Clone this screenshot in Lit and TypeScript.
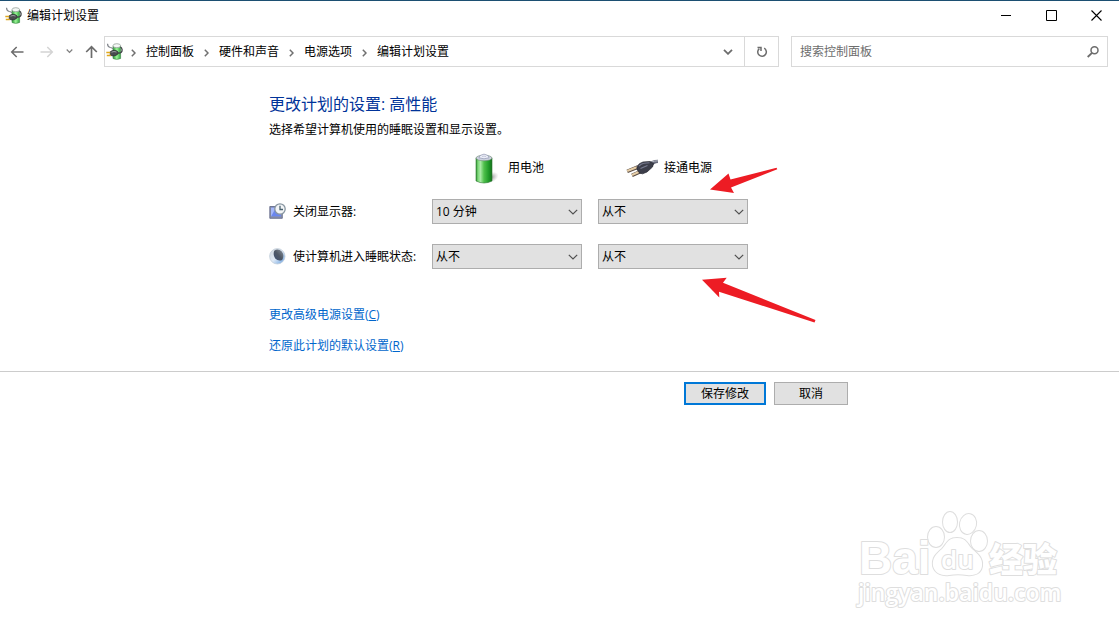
import { LitElement, html, css, svg } from "lit";
import { customElement, property } from "lit/decorators.js";

const powerIcon = html`<svg class="power" viewBox="0 0 17 17" width="17" height="17" aria-hidden="true">
  <defs>
    <linearGradient id="pg" x1="0" x2="1"><stop offset="0" stop-color="#2c9c38" /><stop offset=".5" stop-color="#9df598" /><stop offset="1" stop-color="#2fa53c" /></linearGradient>
  </defs>
  <path d="M7 3v12.500q3.800 1.800 7.600 0V3z" fill="url(#pg)" stroke="#3c8546" stroke-width=".6" />
  <ellipse cx="10.800" cy="2.700" rx="3.800" ry="2" fill="#f4f8f5" stroke="#8a958e" stroke-width=".7" />
  <path d="M1.500.8q.2 3.200 2.800 3.700 2 .2 3 1.500" fill="none" stroke="#80848a" stroke-width="1.200" />
  <path d="M12.300 10.300q4-.4 3.800-3.600-.3-2.200-1.800-2.700" fill="none" stroke="#44474a" stroke-width="1.300" />
  <path d="M4.200 8.700q2-1.500 4.200-1.400 3.400.3 4 2.500-.4 2.300-3.500 3-2.900.4-4.700-.6z" fill="#484b4e" stroke="#222426" stroke-width=".6" />
  <path d="M5.500 9.200q2.500-1.300 5-.2" fill="none" stroke="#9a9fa3" stroke-width="1" />
  <path d="M.3 9.500h3.900M.8 12.500h4" stroke="#e0a81c" stroke-width="1.700" />
</svg>`;

const crumbChevron = html`<svg class="sep" viewBox="0 0 5 8" width="5" height="8" aria-hidden="true">
  <path d="M.8.8 4 4 .8 7.200" fill="none" stroke="#707070" stroke-width="1.500" />
</svg>`;

const smallChevron = (color: string, w: number) => html`<svg viewBox="0 0 10 6" width=${w} height=${w * 0.6} aria-hidden="true">
  <path d="M1 .8 5 4.800 9 .8" fill="none" stroke=${color} stroke-width="1.800" />
</svg>`;

const batteryIcon = html`<svg viewBox="0 0 32 32" width="32" height="32" aria-hidden="true">
  <defs>
    <linearGradient id="bg" x1="0" x2="1">
      <stop offset="0" stop-color="#2d8a2e" /><stop offset=".12" stop-color="#7ad877" /><stop offset=".28" stop-color="#a9eaa5" />
      <stop offset=".5" stop-color="#4fc04b" /><stop offset=".8" stop-color="#1f9a28" /><stop offset="1" stop-color="#15701c" />
    </linearGradient>
    <radialGradient id="bs"><stop offset="0" stop-color="#666" stop-opacity=".7" /><stop offset="1" stop-color="#999" stop-opacity="0" /></radialGradient>
  </defs>
  <ellipse cx="23" cy="25.500" rx="8" ry="5" fill="url(#bs)" transform="rotate(-25 23 25.500)" />
  <path d="M8 6v23q8 4 16 0V6z" fill="url(#bg)" stroke="#2b7a30" stroke-width=".6" />
  <ellipse cx="16" cy="6" rx="8" ry="2.800" fill="#cdd2df" stroke="#6f8a77" stroke-width=".6" />
  <path d="M11 5.800q.3-2.800 2.800-2.900 2.200-1.600 4.400 0 2.500.1 2.800 2.900-5 2-10 0z" fill="#eceef8" stroke="#9097b2" stroke-width=".7" />
  <path d="M14 4.500q2-1 4 .2" fill="none" stroke="#a9aec4" stroke-width=".6" />
</svg>`;

const plugIcon = html`<svg viewBox="0 0 32 20" width="32" height="20" aria-hidden="true">
  <path d="M21 6.500q4-4.800 11-4.800v3.200q-4 .2-6.500 3.800z" fill="#686b7b" />
  <path d="M25 4.300q3-1.500 7-1.500" fill="none" stroke="#b4b7c2" stroke-width="1" />
  <path d="M1.200 13.300 12 9M6 17.300l9-4" stroke="#574a42" stroke-width="3.600" />
  <path d="M1.200 13 12 8.700M6 17l9-4" stroke="#e6cda6" stroke-width="2" />
  <path d="M11 8.500q2-3.500 6-4.500l7-.5 3.500 2-1 3.500-5.500 5-4.500 1.800-3-.8-2.500-3.500z" fill="#3c3e4a" stroke="#23242e" stroke-width=".7" />
  <path d="M13 8.200q2-2.500 4.800-3l5.700-.5M14.500 10.500l7-3" fill="none" stroke="#777b90" stroke-width="1.100" />
</svg>`;

const displayIcon = html`<svg viewBox="0 0 17 17" width="17" height="17" aria-hidden="true">
  <path d="M.8 3.500h12.500v11.800H.8z" fill="#8a91a8" stroke="#5b6284" stroke-width=".8" />
  <path d="M2 4.700h10v8.700H2z" fill="#6a86ee" />
  <path d="M2 13.400V4.700h5z" fill="#a5b8fa" />
  <circle cx="11" cy="6" r="5.200" fill="#f3f5f7" stroke="#8795a0" stroke-width="1.300" />
  <path d="M11 2.800V6.500h3" fill="none" stroke="#4b6370" stroke-width="1.300" />
</svg>`;

const moonIcon = html`<svg viewBox="0 0 17 17" width="17" height="17" aria-hidden="true">
  <defs>
    <linearGradient id="mg" x1="0" y1="0" x2="1" y2="1"><stop offset="0" stop-color="#d0d6dc" /><stop offset=".5" stop-color="#dfeaf6" /><stop offset="1" stop-color="#5f9be0" /></linearGradient>
    <linearGradient id="md" x1="1" y1="0" x2="0" y2="1"><stop offset="0" stop-color="#8a929c" /><stop offset=".5" stop-color="#4f5967" /><stop offset="1" stop-color="#3d5073" /></linearGradient>
  </defs>
  <circle cx="8.300" cy="8.300" r="7.700" fill="url(#mg)" stroke="#c3cedb" stroke-width=".8" />
  <path d="M5.200 2.700q4-2.500 7.600.8 3 4 .4 8.500-4 1.500-7-1.500-2.500-3.500-1-7.800z" fill="url(#md)" />
</svg>`;

@customElement("power-select")
class PowerSelect extends LitElement {
  @property() label = "";
  @property() value = "";

  static styles = css`
    :host { display: block; position: relative; }
    .box {
      appearance: none; display: block; box-sizing: border-box; width: 100%; height: 25px; margin: 0;
      padding: 0 20px 0 3px; border: 1px solid #adadad; border-radius: 0; background: #e1e1e1; color: #000;
      font: 12px/23px "Open Sans", "Noto Sans CJK SC", sans-serif;
    }
    .arrow { position: absolute; right: 4px; top: 10px; pointer-events: none; }
  `;

  render() {
    const options = ["从不", "10 分钟", "30 分钟"];
    return html`<select class="box" aria-label=${this.label}>
        ${options.map((o) => html`<option ?selected=${o === this.value}>${o}</option>`)}
      </select>
      <svg class="arrow" viewBox="0 0 10 6" width="10" height="6" aria-hidden="true">
        <path d="M.8.8 5 5 9.200.8" fill="none" stroke="#505050" stroke-width="1.200" />
      </svg>`;
  }
}

@customElement("site-watermark")
class SiteWatermark extends LitElement {
  static styles = css`
    :host { display: block; pointer-events: none; }
    .mark { display: block; overflow: visible; }
    .shape { fill: #fff; stroke: #dedede; stroke-width: 2; paint-order: stroke; stroke-linejoin: round; }
    .latin { font: bold 46px "Liberation Sans", sans-serif; }
    .du { font: 600 26px "Open Sans", sans-serif; }
    .han { font: 900 34px "Noto Sans CJK SC", sans-serif; }
    .site { font: 600 23px "Open Sans", sans-serif; }
  `;

  render() {
    const toes = [
      [79, 37, 8, 10, 0], [93, 22, 7, 10, 0], [111, 24, 8, 10, 12], [122, 41, 8, 10, 0],
    ];
    return html`<svg class="mark" width="204" height="100" viewBox="0 0 204 100">
      ${toes.map(([x, y, rx, ry, r]) => svg`<ellipse class="shape" cx=${x} cy=${y} rx=${rx} ry=${ry} transform="rotate(${r} ${x} ${y})" />`)}
      <path class="shape" d="M100 38C90 38 90 44 85 49 79 54 75 58 76 66 78 74 86 76 92 75 98 74 104 74 110 75 118 76 124 73 125 66 126 58 121 54 115 49 110 44 110 38 100 38Z" />
      <text class="shape latin" x="2" y="74">Bai</text>
      <text class="shape du" x="84" y="69">du</text>
      <text class="shape han" x="132" y="72">经验</text>
      <text class="shape site" x="1" y="101">jingyan.baidu.com</text>
    </svg>`;
  }
}

@customElement("app-root")
class AppRoot extends LitElement {
  static styles = css`
    :host {
      display: block; position: relative; box-sizing: border-box; min-height: 100vh; border-top: 1px solid #1c4f72;
      background: #fff; color: #000; font: 12px/16px "Open Sans", "Noto Sans CJK SC", sans-serif; overflow: hidden;
    }
    svg { display: block; flex: none; }
    button { font: inherit; color: inherit; padding: 0; margin: 0; border: 0; background: none; }
    .titlebar { display: flex; align-items: center; height: 29px; padding-left: 5px; }
    .title { margin: 0 auto 0 5px; font: inherit; }
    .win { display: flex; align-items: center; justify-content: center; width: 45px; height: 29px; }
    .toolbar { display: flex; align-items: stretch; height: 31px; margin-top: 6px; padding: 0 11px 0 10px; }
    .history { display: flex; align-items: center; width: 94px; gap: 12px; }
    .tool { display: flex; align-items: center; justify-content: center; }
    .forward { padding-left: 4px; }
    .address { flex: 1; display: flex; align-items: center; box-sizing: border-box; border: 1px solid #d9d9d9; padding-left: 1px; }
    .crumbs { display: flex; align-items: center; margin-right: auto; margin-left: -2px; }
    .sep { margin: 2px 10px 0; }
    .crumb { color: inherit; text-decoration: none; }
    .drop { margin-right: 11px; }
    .refresh { width: 35px; box-sizing: border-box; border: 1px solid #d9d9d9; margin-left: -1px; }
    .search { width: 317px; display: flex; align-items: center; box-sizing: border-box; border: 1px solid #d9d9d9; margin-left: 12px; padding: 0 8px; }
    .query { flex: 1; min-width: 0; border: 0; outline: 0; padding: 0; background: none; font: inherit; color: #6d6d6d; }
    .query::placeholder { color: #6d6d6d; opacity: 1; }
    .column { width: 581px; max-width: 100%; margin: 0 auto; position: relative; box-sizing: border-box; }
    .main { padding: 25px 0 17px; }
    .heading { margin: 0; font-size: 16px; font-weight: 400; line-height: 24px; color: #003399; }
    .intro { margin: 6px 0 0; }
    .settings { display: grid; grid-template-columns: 147px 150px 150px; column-gap: 16px; row-gap: 20px; align-items: center; margin-top: 16px; }
    .source { display: flex; align-items: center; gap: 8px; height: 28px; margin-bottom: -3px; }
    .battery { padding-left: 36px; }
    .mains { padding-left: 28px; gap: 6px; }
    .name { display: flex; align-items: center; gap: 7px; white-space: nowrap; }
    .links { display: flex; flex-direction: column; align-items: flex-start; gap: 15px; margin-top: 38px; }
    .link { color: #0066cc; text-decoration: none; }
    .key { text-decoration: underline; }
    .arrows { position: absolute; left: 0; top: 0; pointer-events: none; overflow: visible; }
    .footer { border-top: 1px solid #cccccc; padding-top: 10px; }
    .actions { display: flex; justify-content: flex-end; gap: 8px; padding-right: 2px; }
    .action { box-sizing: border-box; width: 74px; height: 23px; background: #e1e1e1; border: 1px solid #adadad; }
    .primary { width: 82px; border: 2px solid #0078d7; }
    .watermark { position: absolute; right: 58px; bottom: 31px; }
  `;

  render() {
    const crumbs = ["控制面板", "硬件和声音", "电源选项", "编辑计划设置"];
    return html`
      <header class="titlebar">
        ${powerIcon}
        <h1 class="title">编辑计划设置</h1>
        <button class="win" aria-label="最小化"><svg width="11" height="11"><path d="M0 5.500h10" stroke="#000" /></svg></button>
        <button class="win" aria-label="最大化"><svg width="12" height="11"><path d="M.5.5h10v10H.5z" fill="none" stroke="#000" /></svg></button>
        <button class="win" aria-label="关闭"><svg width="11" height="11"><path d="M.5.5l10 10M10.500.5l-10 10" fill="none" stroke="#000" stroke-width="1.100" /></svg></button>
      </header>
      <div class="toolbar">
        <div class="history">
          <button class="tool" aria-label="后退"><svg width="14" height="12" viewBox="0 0 14 12"><path d="M13.500 6H2M6.700 1 1.700 6l5 5" fill="none" stroke="#6c6c6c" stroke-width="1.500" /></svg></button>
          <button class="tool forward" aria-label="前进"><svg width="14" height="12" viewBox="0 0 14 12"><path d="M.5 6H12M7.300 1l5 5-5 5" fill="none" stroke="#d4d4d4" stroke-width="1.500" /></svg></button>
          <button class="tool" aria-label="最近的位置">${smallChevron("#808080", 7)}</button>
          <button class="tool" aria-label="向上"><svg width="13" height="13" viewBox="0 0 13 13"><path d="M6.500 13V2M1.200 7l5.300-5.300L11.800 7" fill="none" stroke="#6c6c6c" stroke-width="1.700" /></svg></button>
        </div>
        <div class="address">
          ${powerIcon}
          <nav class="crumbs" aria-label="路径">
            ${crumbs.map((c) => html`${crumbChevron}<a class="crumb" href="#">${c}</a>`)}
          </nav>
          <button class="tool drop" aria-label="以前的位置">${smallChevron("#6c6c6c", 10)}</button>
        </div>
        <button class="tool refresh" aria-label="刷新"><svg width="12" height="12" viewBox="0 0 12 12"><path d="M8.200 2.200A4.300 4.300 0 1 1 3.300 2.600" fill="none" stroke="#6c6c6c" stroke-width="1.500" /><path d="M1.500 1.500H5V5" fill="none" stroke="#6c6c6c" stroke-width="1.500" /></svg></button>
        <label class="search">
          <input class="query" type="text" placeholder="搜索控制面板" aria-label="搜索控制面板" />
          <svg width="12" height="12" viewBox="0 0 12 12" aria-hidden="true"><circle cx="7.500" cy="4.300" r="3.500" fill="none" stroke="#6c6c6c" stroke-width="1.500" /><path d="M5 6.800.7 11" stroke="#6c6c6c" stroke-width="1.800" /></svg>
        </label>
      </div>
      <main class="column main">
        <h2 class="heading">更改计划的设置: 高性能</h2>
        <p class="intro">选择希望计算机使用的睡眠设置和显示设置。</p>
        <div class="settings">
          <span></span>
          <div class="source battery">${batteryIcon}<span>用电池</span></div>
          <div class="source mains">${plugIcon}<span>接通电源</span></div>
          <div class="name">${displayIcon}<span>关闭显示器:</span></div>
          <power-select label="关闭显示器: 用电池" value="10 分钟"></power-select>
          <power-select label="关闭显示器: 接通电源" value="从不"></power-select>
          <div class="name">${moonIcon}<span>使计算机进入睡眠状态:</span></div>
          <power-select label="使计算机进入睡眠状态: 用电池" value="从不"></power-select>
          <power-select label="使计算机进入睡眠状态: 接通电源" value="从不"></power-select>
        </div>
        <div class="links">
          <a class="link" href="#">更改高级电源设置(<span class="key">C</span>)</a>
          <a class="link" href="#">还原此计划的默认设置(<span class="key">R</span>)</a>
        </div>
        <svg class="arrows" width="581" height="280" viewBox="269 67 581 280" aria-hidden="true">
          <path d="M710 189.500 728.500 173.500 730.500 179.500 776.500 167.700 777.300 169.300 731 187.500 734 193Z" fill="#ed1c24" />
          <path d="M702 279.700 726.700 277.700 723 282.700 815.500 320 814.500 322.500 719 291.700 719.300 297.500Z" fill="#ed1c24" />
        </svg>
      </main>
      <footer class="footer">
        <div class="column actions">
          <button class="action primary">保存修改</button>
          <button class="action">取消</button>
        </div>
      </footer>
      <site-watermark class="watermark"></site-watermark>
    `;
  }
}
